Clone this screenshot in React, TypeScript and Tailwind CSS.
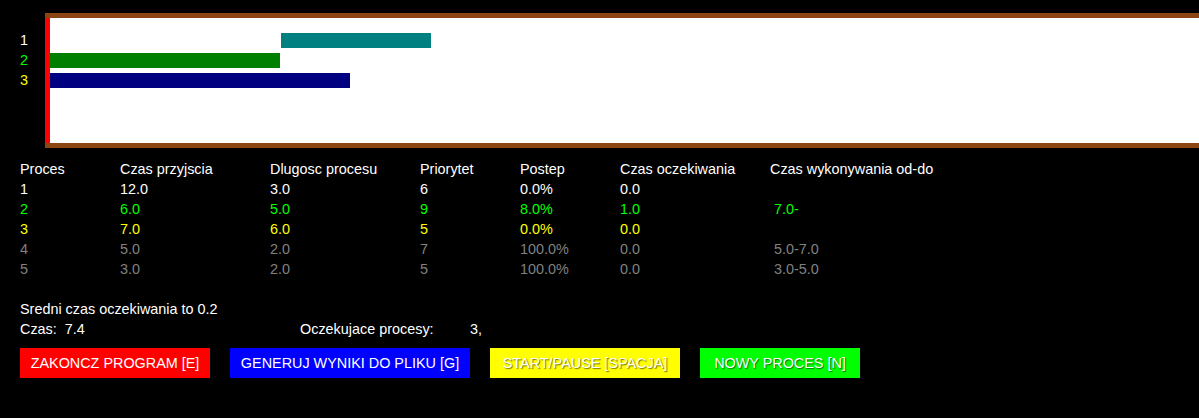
import React from 'react';

type Row = {
  id: string;
  arrival: string;
  length: string;
  priority: string;
  progress: string;
  wait: string;
  range: string;
  color: string;
};

const rows: Row[] = [
  { id: '1', arrival: '12.0', length: '3.0', priority: '6', progress: '0.0%', wait: '0.0', range: '', color: 'text-white' },
  { id: '2', arrival: '6.0', length: '5.0', priority: '9', progress: '8.0%', wait: '1.0', range: ' 7.0-', color: 'text-[#00ff00]' },
  { id: '3', arrival: '7.0', length: '6.0', priority: '5', progress: '0.0%', wait: '0.0', range: '', color: 'text-[#ffff00]' },
  { id: '4', arrival: '5.0', length: '2.0', priority: '7', progress: '100.0%', wait: '0.0', range: ' 5.0-7.0', color: 'text-[#808080]' },
  { id: '5', arrival: '3.0', length: '2.0', priority: '5', progress: '100.0%', wait: '0.0', range: ' 3.0-5.0', color: 'text-[#808080]' },
];

const cols = 'grid grid-cols-[100px_150px_150px_100px_100px_150px_1fr] h-5 items-center whitespace-pre';

const buttons = [
  { label: 'ZAKONCZ PROGRAM [E]', cls: 'w-[190px] bg-[#ff0000]' },
  { label: 'GENERUJ WYNIKI DO PLIKU [G]', cls: 'w-[240px] bg-[#0000ff]' },
  { label: 'START/PAUSE [SPACJA]', cls: 'w-[190px] bg-[#ffff00] [text-shadow:1px_1px_1px_rgba(0,0,0,0.55)]' },
  { label: 'NOWY PROCES [N]', cls: 'w-[160px] bg-[#00ff00] [text-shadow:1px_1px_1px_rgba(0,0,0,0.55)]' },
];

export default function App() {
  return (
    <div className="w-[1199px] h-[418px] bg-black text-white text-[14.4px] leading-5 font-['Liberation_Sans',Arial,sans-serif] overflow-hidden">
      {/* gantt chart */}
      <div className="flex pt-[13px]">
        <div className="w-[45px] pl-5 pt-[17px] flex flex-col">
          <div className="h-5 text-white">1</div>
          <div className="h-5 text-[#00ff00]">2</div>
          <div className="h-5 text-[#ffff00]">3</div>
        </div>
        <div className="flex-1 bg-[#8b4513] py-[5px]">
          <div className="h-[125px] bg-white border-l-[5px] border-[#ff0000] pt-[15px] flex flex-col gap-[5px]">
            <div className="h-[15px] ml-[231px] w-[150px] bg-[#008080]" />
            <div className="h-[15px] w-[230px] bg-[#008000]" />
            <div className="h-[15px] w-[300px] bg-[#000080]" />
          </div>
        </div>
      </div>

      {/* process table */}
      <div className="mt-[11px] pl-5">
        <div className={cols}>
          <span>Proces</span>
          <span>Czas przyjscia</span>
          <span>Dlugosc procesu</span>
          <span>Priorytet</span>
          <span>Postep</span>
          <span>Czas oczekiwania</span>
          <span>Czas wykonywania od-do</span>
        </div>
        {rows.map((r) => (
          <div key={r.id} className={`${cols} ${r.color}`}>
            <span>{r.id}</span>
            <span>{r.arrival}</span>
            <span>{r.length}</span>
            <span>{r.priority}</span>
            <span>{r.progress}</span>
            <span>{r.wait}</span>
            <span>{r.range}</span>
          </div>
        ))}
      </div>

      {/* summary */}
      <div className="mt-5 pl-5">
        <div className="h-5">Sredni czas oczekiwania to 0.2</div>
        <div className="h-5 flex whitespace-pre">
          <span className="w-[280px]">Czas:  7.4</span>
          <span className="w-[170px]">Oczekujace procesy:</span>
          <span>3,</span>
        </div>
      </div>

      <div className="mt-[9px] pl-5 flex gap-5">
        {buttons.map((b) => (
          <div key={b.label} className={`h-[30px] flex items-center justify-center text-white ${b.cls}`}>
            {b.label}
          </div>
        ))}
      </div>
    </div>
  );
}
